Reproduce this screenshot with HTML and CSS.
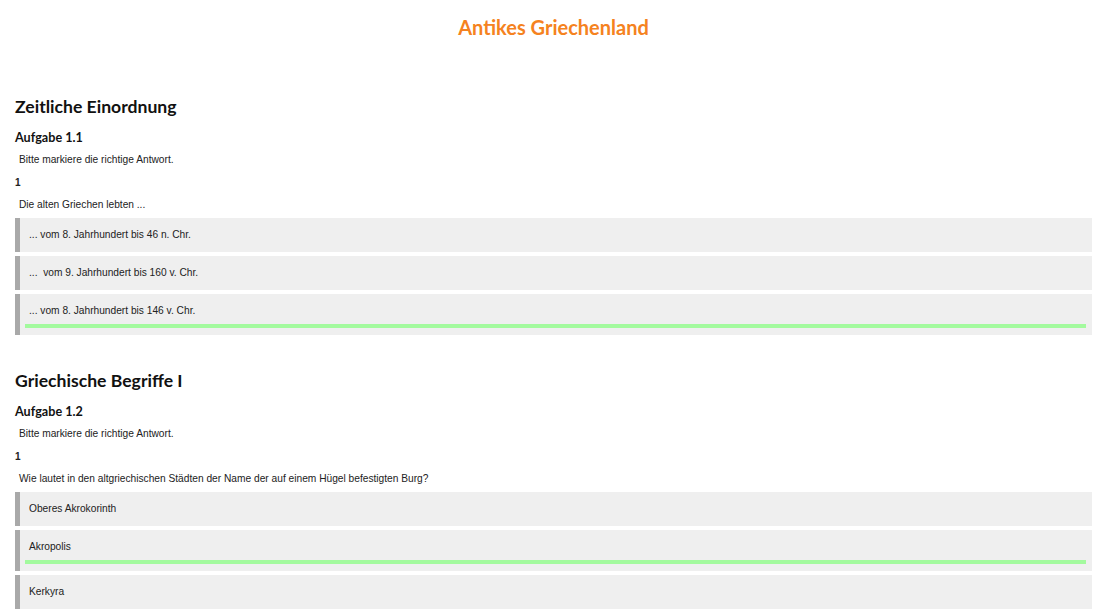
FILE: index.html
```
<!DOCTYPE html>
<html lang="de">
<head>
    <meta charset="UTF-8">
    <title>Antikes Griechenland</title>
    <link rel="stylesheet" href="styles.css">
</head>
<body>
    <h1 class="page-title">Antikes Griechenland</h1>

    <div class="chapter">
        <h2 class="chapter-title">Zeitliche Einordnung</h2>
        <h3 class="task-title">Aufgabe 1.1</h3>
        <p class="task-hint">Bitte markiere die richtige Antwort.</p>
        <div class="question-no">1</div>
        <p class="question">Die alten Griechen lebten ...</p>
        <div class="answers">
            <div class="answer">... vom 8. Jahrhundert bis 46 n. Chr.</div>
            <div class="answer">...&nbsp; vom 9. Jahrhundert bis 160 v. Chr.</div>
            <div class="answer correct">... vom 8. Jahrhundert bis 146 v. Chr.<div class="correct-bar"></div></div>
        </div>
    </div>

    <div class="chapter">
        <h2 class="chapter-title">Griechische Begriffe I</h2>
        <h3 class="task-title">Aufgabe 1.2</h3>
        <p class="task-hint">Bitte markiere die richtige Antwort.</p>
        <div class="question-no">1</div>
        <p class="question">Wie lautet in den altgriechischen Städten der Name der auf einem Hügel befestigten Burg?</p>
        <div class="answers">
            <div class="answer">Oberes Akrokorinth</div>
            <div class="answer correct">Akropolis<div class="correct-bar"></div></div>
            <div class="answer">Kerkyra</div>
        </div>
    </div>
</body>
</html>
```

FILE: styles.css
```
* {
    margin: 0;
    padding: 0;
    box-sizing: border-box;
}
body {
    font-family: 'Liberation Sans', Arial, sans-serif;
    font-size: 10.2px;
    color: #222;
    background: white;
    padding: 0 12px 0 15px;
}
.page-title {
    font-family: 'Lato', 'Open Sans', sans-serif;
    font-size: 20px;
    font-weight: bold;
    color: #f58220;
    text-align: center;
    margin-top: 13px;
    height: 28px;
    line-height: 28px;
    margin-bottom: 53px;
}
.chapter {
    margin-bottom: 33px;
}
.chapter-title {
    font-family: 'Lato', 'Open Sans', sans-serif;
    font-size: 17.6px;
    font-weight: bold;
    color: #111;
    line-height: 26px;
    height: 26px;
}
.task-title {
    font-family: 'Lato', 'Open Sans', sans-serif;
    font-size: 12.6px;
    font-weight: bold;
    color: #111;
    line-height: 18px;
    margin-top: 9px;
}
.task-hint,
.question {
    padding-left: 4px;
    line-height: 14px;
    margin-top: 6px;
}
.question {
    margin-top: 8px;
}
.question-no {
    font-weight: bold;
    font-size: 10px;
    line-height: 14px;
    margin-top: 9px;
}
.answers {
    margin-top: 6px;
    display: flex;
    flex-direction: column;
    gap: 4px;
}
.answer {
    background: #efefef;
    border-left: 5px solid #a9a9a9;
    padding: 10px 6px 10px 9px;
    line-height: 14px;
}
.answer.correct {
    padding-bottom: 7px;
}
.correct-bar {
    height: 4px;
    background: #a3fa9e;
    margin: 6px 0 0 -4px;
}
```
